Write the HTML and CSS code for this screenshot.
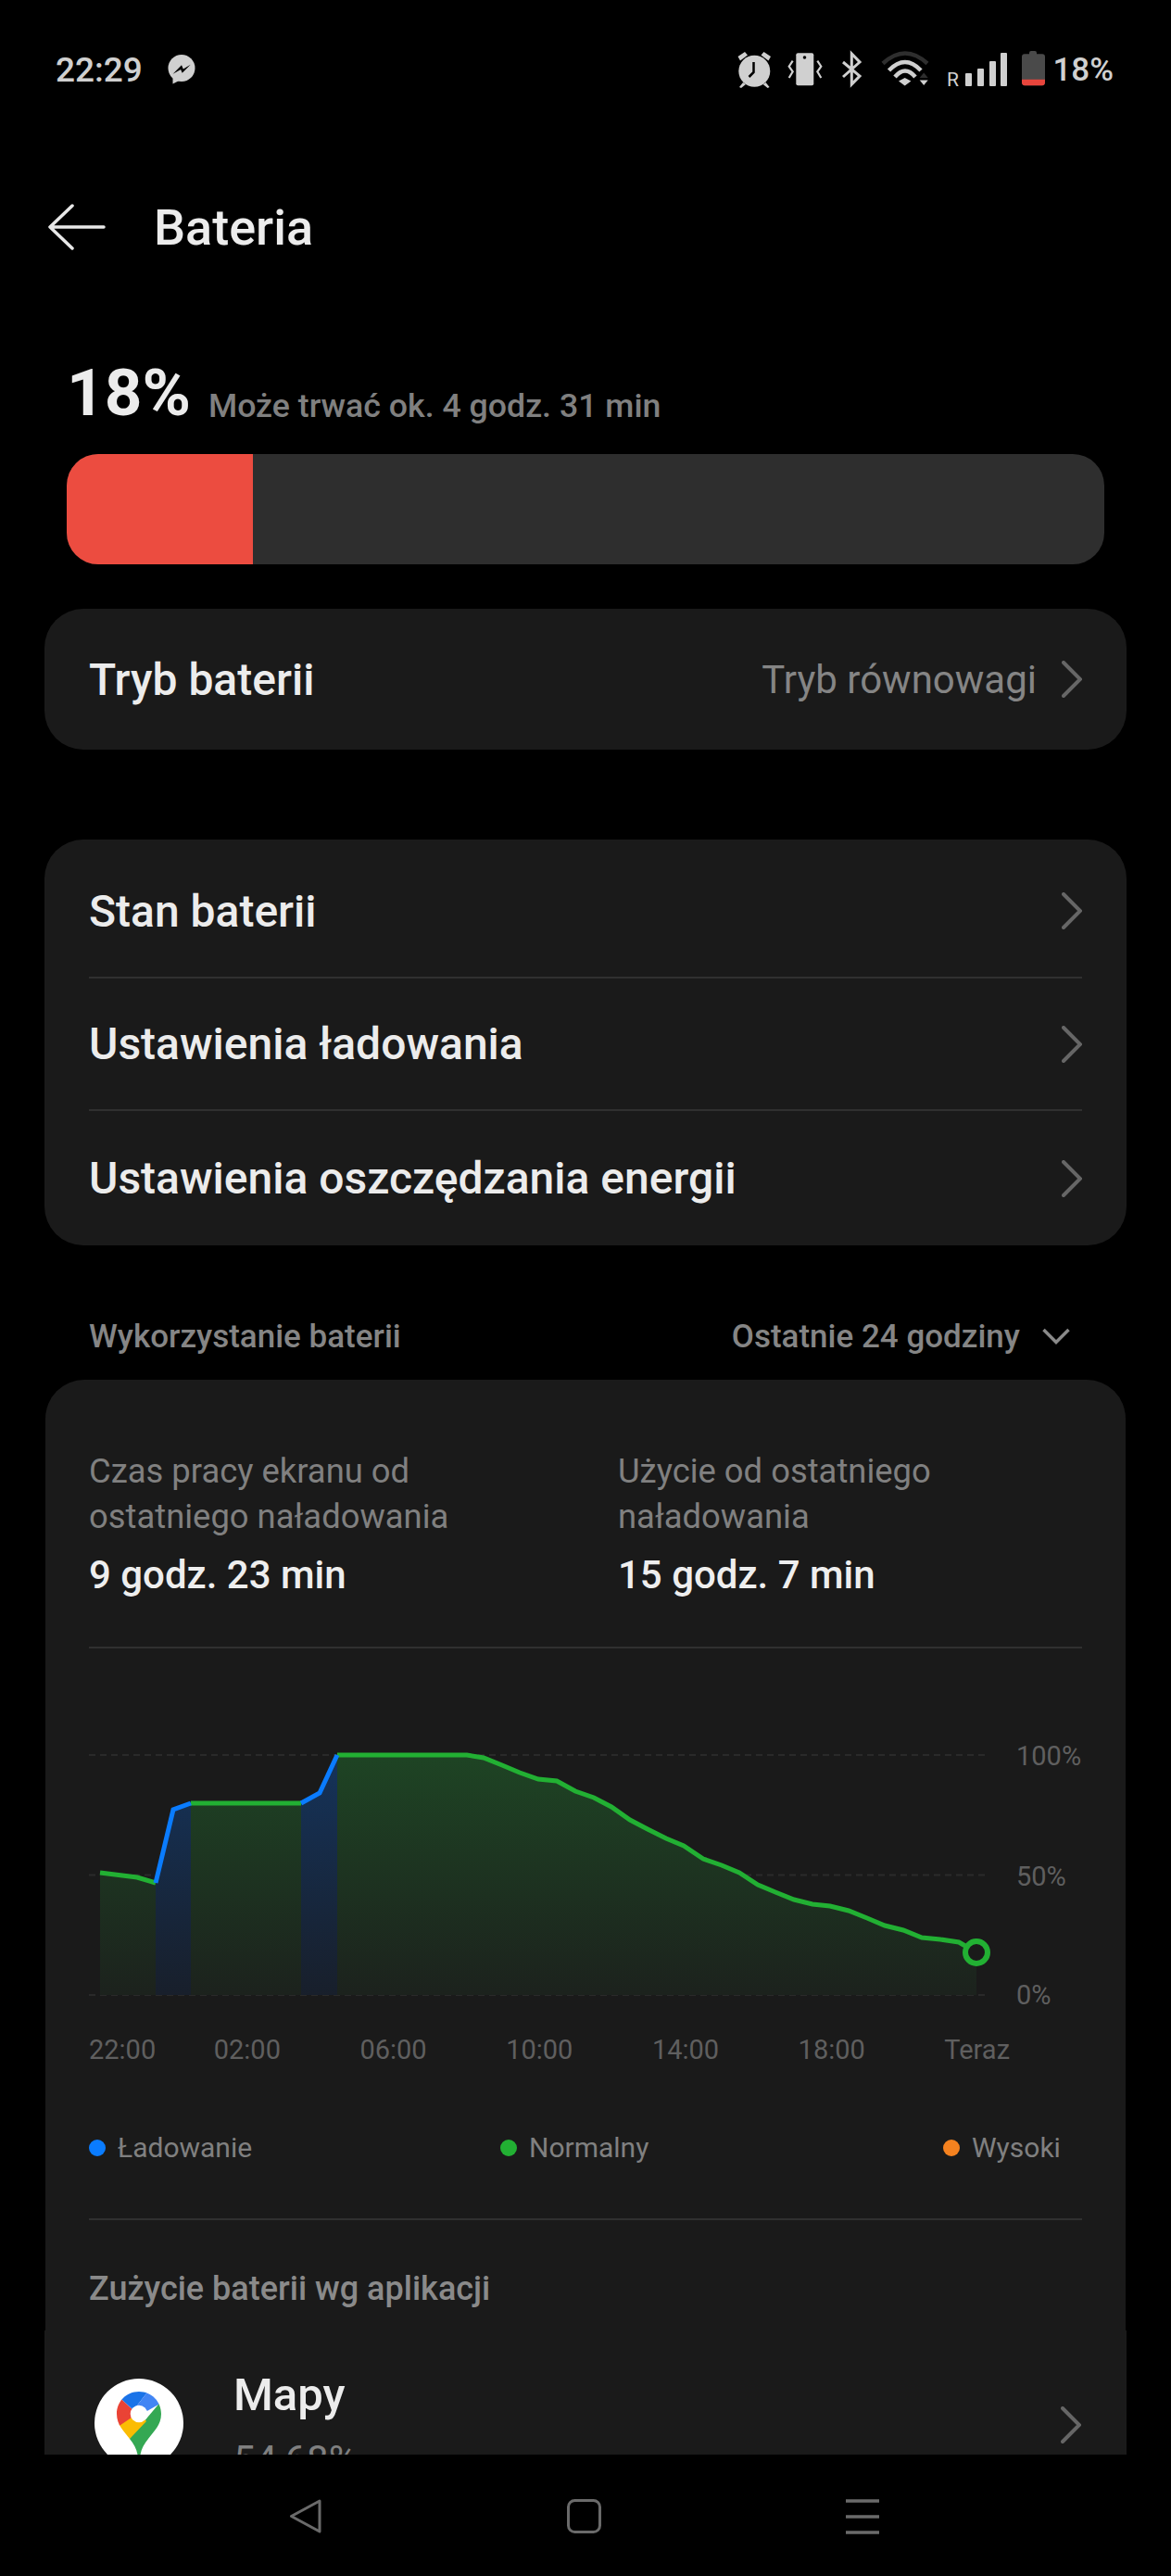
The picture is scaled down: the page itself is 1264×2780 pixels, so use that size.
FILE: index.html
```html
<!DOCTYPE html>
<html lang="pl">
<head>
    <meta charset="UTF-8">
    <title>Bateria</title>
    <link rel="stylesheet" href="styles.css">
</head>
<body>
    <div id="screen">
        <div class="status">
            <div class="status-left">
                <span class="clock">22:29</span>
                <svg width="30" height="32" viewBox="0 0 30 32">
                    <circle cx="15" cy="14.500" r="14.500" fill="#d0d0d0"/>
                    <path fill="#d0d0d0" d="M5.500 23v8.500l7-3.500z"/>
                    <path fill="#000" d="M5.700 20.700L15 11.300l1.800 4.300 7.900-4.900-9 9-1.600-3.700z"/>
                </svg>
            </div>
            <div class="status-right">
                <svg class="status-icons" width="332" height="48" viewBox="795 52 332 48">
                    <!-- budzik -->
                    <circle cx="813.300" cy="77.700" r="17" fill="#d0d0d0"/>
                    <path fill="#d0d0d0" d="M795.500 62l7.500-5 3 3.500-8 6zM831 62l-7.500-5-3 3.500 8 6zM801 90l-4 5 2 1 5-4zM825.600 90l4 5-2 1-5-4z"/>
                    <path fill="none" stroke="#000" stroke-width="2.500" d="M812.500 68v11l-5 5"/>
                    <!-- wibracje -->
                    <rect x="858.300" y="58.300" width="19" height="35" rx="2" fill="#d0d0d0"/>
                    <circle cx="867.500" cy="63" r="1.800" fill="#000"/>
                    <path fill="none" stroke="#d0d0d0" stroke-width="2.200" d="M854.700 66.700l-4 6 4 5.600-4 6.700M881.300 66.700l4 6-4 5.600 4 6.700"/>
                    <!-- bluetooth -->
                    <path fill="none" stroke="#d0d0d0" stroke-width="3" d="M909 68l18 15-8.700 9V59l8.700 9-18 16"/>
                    <!-- wifi -->
                    <path fill="none" stroke="#2e2e2e" stroke-width="4.500" d="M952 69.500Q976 47.500 1000 69.500"/>
                    <path fill="none" stroke="#d0d0d0" stroke-width="4.500" d="M958.500 77Q976 59 993 77M965 84Q976 71 987 84"/>
                    <path fill="#d0d0d0" d="M975.700 85l-6.700 3.500 6.700 5 6.700-5z"/>
                    <path fill="#2e2e2e" d="M991.700 85h9l-4.500-5.500z"/>
                    <path fill="#d0d0d0" d="M991.700 87.500h9l-4.500 5.500z"/>
                    <!-- zasieg -->
                    <text x="1021" y="94" class="roam">R</text>
                    <rect x="1041" y="80" width="7" height="14" rx="1" fill="#d0d0d0"/>
                    <rect x="1054" y="75" width="7" height="19" rx="1" fill="#d0d0d0"/>
                    <rect x="1067" y="67" width="7" height="27" rx="1" fill="#d0d0d0"/>
                    <rect x="1079" y="58" width="7" height="36" rx="1" fill="#d0d0d0"/>
                    <!-- bateria -->
                    <path fill="#4a4a4a" d="M1110 59.300V58a2 2 0 0 1 2-2h4a2 2 0 0 1 2 2v1.300h6a3 3 0 0 1 3 3V90a3.300 3.300 0 0 1-3 3.300h-19a3.300 3.300 0 0 1-3-3.300V62.300a3 3 0 0 1 3-3z"/>
                    <path fill="#e8453c" d="M1102 86.700h25V90a3.300 3.300 0 0 1-3 3.300h-19a3.300 3.300 0 0 1-3-3.300z"/>
                </svg>
                <span class="pct">18%</span>
            </div>
        </div>

        <div class="appbar">
            <svg width="62" height="50" viewBox="0 0 62 50"><path fill="none" stroke="#e8e8e8" stroke-width="3.500" stroke-linecap="round" stroke-linejoin="round" d="M26 2L2 25l24 23M2 25h58"/></svg>
            <h1>Bateria</h1>
        </div>

        <div class="scroll">
            <div class="charge">
                <span class="big">18%</span>
                <span class="remain">Może trwać ok. 4 godz. 31 min</span>
            </div>
            <div class="bar"><div class="bar-fill"></div></div>

            <div class="card">
                <div class="row">
                    <span class="row-name">Tryb baterii</span>
                    <span class="row-val">Tryb równowagi</span>
                    <svg class="chev" width="22" height="40" viewBox="0 0 22 40"><path d="M2 2l18 18L2 38"/></svg>
                </div>
            </div>

            <div class="card card-list">
                <div class="row">
                    <span class="row-name">Stan baterii</span>
                    <svg class="chev" width="22" height="40" viewBox="0 0 22 40"><path d="M2 2l18 18L2 38"/></svg>
                </div>
                <div class="row">
                    <span class="row-name">Ustawienia ładowania</span>
                    <svg class="chev" width="22" height="40" viewBox="0 0 22 40"><path d="M2 2l18 18L2 38"/></svg>
                </div>
                <div class="row">
                    <span class="row-name">Ustawienia oszczędzania energii</span>
                    <svg class="chev" width="22" height="40" viewBox="0 0 22 40"><path d="M2 2l18 18L2 38"/></svg>
                </div>
            </div>

            <div class="usage-head">
                <span>Wykorzystanie baterii</span>
                <span class="range">Ostatnie 24 godziny
                    <svg width="30" height="18" viewBox="0 0 30 18"><path fill="none" stroke="#8a8a8a" stroke-width="3.500" d="M1.500 2L15 15.500 28.500 2"/></svg>
                </span>
            </div>

            <div class="card card-usage">
                <div class="stats">
                    <div class="stat">
                        <p>Czas pracy ekranu od<br>ostatniego naładowania</p>
                        <b>9 godz. 23 min</b>
                    </div>
                    <div class="stat">
                        <p>Użycie od ostatniego<br>naładowania</p>
                        <b>15 godz. 7 min</b>
                    </div>
                </div>

                <div class="chart">
                    <svg width="1072" height="300" viewBox="96 1880 1072 300">
                        <defs>
                            <linearGradient id="gGreen" gradientUnits="userSpaceOnUse" x1="0" y1="1894" x2="0" y2="2153">
                                <stop offset="0" stop-color="#1e4424"/><stop offset="1" stop-color="#1c221d"/>
                            </linearGradient>
                            <linearGradient id="gBlue" gradientUnits="userSpaceOnUse" x1="0" y1="1894" x2="0" y2="2153">
                                <stop offset="0" stop-color="#15335a"/><stop offset="1" stop-color="#181f2b"/>
                            </linearGradient>
                        </defs>
                        <path class="grid" d="M96 1894H1066M96 2023.500H1066M96 2153H1066"/>
                        <path fill="url(#gGreen)" d="M108 2153V2021L148 2026 168 2032V2153zM206 2153V1946H325V2153zM364 2153V1894H504L522 1897 542 1905 561 1913 581 1920 601 1922 621 1933 641 1940 660 1950 680 1964 699 1974 719 1984 738 1992 759 2006 779 2013 798 2021 818 2034 837 2042 857 2050 877 2055 896 2057 916 2062 936 2070 955 2078 975 2083 995 2091 1015 2093 1035 2096 1054 2107V2153z"/>
                        <path fill="url(#gBlue)" d="M168 2153V2032L187 1953 206 1946V2153zM325 2153V1946L345 1935 364 1894V2153z"/>
                        <path class="line-green" d="M108 2021L148 2026 168 2032M206 1946H325M364 1894H504L522 1897 542 1905 561 1913 581 1920 601 1922 621 1933 641 1940 660 1950 680 1964 699 1974 719 1984 738 1992 759 2006 779 2013 798 2021 818 2034 837 2042 857 2050 877 2055 896 2057 916 2062 936 2070 955 2078 975 2083 995 2091 1015 2093 1035 2096 1054 2107"/>
                        <path class="line-blue" d="M168 2032L187 1953 206 1946M325 1946L345 1935 364 1894"/>
                        <circle class="now" cx="1054" cy="2107" r="12"/>
                    </svg>
                    <div class="y-axis"><span>100%</span><span>50%</span><span>0%</span></div>
                </div>

                <div class="x-axis">
                    <span>22:00</span><span>02:00</span><span>06:00</span><span>10:00</span><span>14:00</span><span>18:00</span><span>Teraz</span>
                </div>

                <div class="legend">
                    <span><i class="dot dot-blue"></i>Ładowanie</span>
                    <span><i class="dot dot-green"></i>Normalny</span>
                    <span><i class="dot dot-orange"></i>Wysoki</span>
                </div>

                <div class="apps-head">Zużycie baterii wg aplikacji</div>
            </div>

            <div class="card card-apps">
                <div class="app">
                    <svg class="app-ico" width="96" height="96" viewBox="0 0 96 96">
                        <defs>
                            <clipPath id="pin"><path d="M48 14C62 14 72 25 72 38 72 50 64 57 58 65 53 71 50 77 49 85H47C46 77 43 71 38 65 32 57 24 50 24 38 24 25 34 14 48 14z"/></clipPath>
                        </defs>
                        <circle cx="48" cy="48" r="48" fill="#fff"/>
                        <g clip-path="url(#pin)">
                            <path fill="#34a853" d="M74 22L30 74 60 100 90 60z"/>
                            <path fill="#fbbc04" d="M20 56L44 30 56 46 37 66 30 76z"/>
                            <path fill="#ea4335" d="M15 15L30 23 46 38 22 54 15 60z"/>
                            <path fill="#1a73e8" d="M15 0H56V16L42 34 30 23 15 15z"/>
                            <path fill="#4285f4" d="M56 0H90V10L69 28 48 40 42 34 56 16z"/>
                        </g>
                        <circle cx="48" cy="38" r="9.300" fill="#fff"/>
                    </svg>
                    <div class="app-text">
                        <span class="app-name">Mapy</span>
                        <span class="app-pct">54,68%</span>
                    </div>
                    <svg class="chev" width="22" height="40" viewBox="0 0 22 40"><path d="M2 2l18 18L2 38"/></svg>
                </div>
            </div>
        </div>

        <div class="nav">
            <svg width="36" height="37" viewBox="0 0 36 37"><path fill="none" stroke="#6a6a6a" stroke-width="3" stroke-linejoin="round" d="M33 2L2.500 18.500 33 35z"/></svg>
            <svg width="37" height="37" viewBox="0 0 37 37"><rect x="1.500" y="1.500" width="34" height="34" rx="7" fill="none" stroke="#6a6a6a" stroke-width="3"/></svg>
            <svg width="36" height="38" viewBox="0 0 36 38"><path fill="none" stroke="#6a6a6a" stroke-width="3.500" d="M0 2h36M0 19h36M0 36h36"/></svg>
        </div>
    </div>
</body>
</html>
```
FILE: styles.css
```css
* {
    margin: 0;
    padding: 0;
    box-sizing: border-box;
}

body {
    background: #000;
    font-family: Roboto, "Noto Sans", sans-serif;
}

#screen {
    width: 1264px;
    height: 2780px;
    display: flex;
    flex-direction: column;
    overflow: hidden;
}

.status {
    height: 150px;
    flex: none;
    display: flex;
    justify-content: space-between;
    align-items: center;
    padding: 0 62px 0 60px;
}

.status-left {
    display: flex;
    align-items: center;
    gap: 27px;
}

.clock {
    font-size: 37px;
    font-weight: 500;
    color: #d0d0d0;
}

.status-right {
    display: flex;
    align-items: center;
    gap: 8px;
}

.status-icons {
    display: block;
}

.roam {
    font-size: 21px;
    fill: #d0d0d0;
}

.pct {
    font-size: 35px;
    font-weight: 500;
    color: #d0d0d0;
}

.appbar {
    height: 190px;
    flex: none;
    display: flex;
    align-items: center;
    gap: 52px;
    padding: 0 52px;
}

.appbar h1 {
    font-size: 54px;
    font-weight: 500;
    color: #ececec;
}

.scroll {
    flex: 1;
    overflow: hidden;
    padding: 0 48px;
}

.charge {
    padding: 42px 24px 0;
    height: 124px;
    white-space: nowrap;
}

.big {
    font-size: 71px;
    font-weight: 700;
    color: #ececec;
}

.remain {
    margin-left: 15px;
    font-size: 35.7px;
    font-weight: 500;
    color: #808080;
    vertical-align: -2px;
}

.bar {
    margin: 26px 24px 48px;
    height: 119px;
    border-radius: 34px;
    background: #2e2e2e;
    overflow: hidden;
}

.bar-fill {
    width: 201px;
    height: 100%;
    background: #ec4c40;
}

.card {
    background: #1a1a1a;
    border-radius: 42px;
    padding: 0 48px;
}

.row {
    height: 152px;
    display: flex;
    align-items: center;
}

.row-name {
    flex: 1;
    font-size: 48px;
    font-weight: 500;
    color: #ececec;
}

.row-val {
    font-size: 42px;
    color: #858585;
    margin-right: 27px;
}

.chev {
    fill: none;
    stroke: #666;
    stroke-width: 4;
    stroke-linecap: round;
    flex: none;
}

.card-list {
    margin-top: 97px;
}

.card-list .row {
    height: 143px;
    border-top: 2px solid #303030;
}

.card-list .row:first-child {
    border-top: 0;
    height: 148px;
    padding-top: 6px;
}

.card-list .row:last-child {
    height: 147px;
}

.usage-head {
    height: 145px;
    display: flex;
    align-items: center;
    justify-content: space-between;
    padding: 51px 61px 0 48px;
    font-size: 35px;
    font-weight: 500;
    color: #858585;
}

.range {
    display: flex;
    align-items: center;
    gap: 24px;
}

.card-usage {
    margin: 0 1px;
    padding: 0 47px;
    border-radius: 42px 42px 0 0;
    height: 1026px;
}

.card-apps {
    border-radius: 0;
    height: 300px;
}

.stats {
    display: flex;
    padding: 74px 0 52px;
    border-bottom: 2px solid #303030;
}

.stat {
    flex: none;
}

.stat:first-child {
    width: 571px;
}

.stat p {
    font-size: 36.4px;
    line-height: 49px;
    color: #808080;
}

.stat b {
    display: block;
    margin-top: 14px;
    font-size: 42px;
    line-height: 50px;
    font-weight: 500;
    color: #eee;
}

.chart {
    position: relative;
    height: 300px;
    margin-top: 101px;
}

.chart svg {
    display: block;
}

.grid {
    fill: none;
    stroke: #2a2a2a;
    stroke-width: 2;
    stroke-dasharray: 7 5;
}

.line-green {
    fill: none;
    stroke: #22b033;
    stroke-width: 5;
}

.line-blue {
    fill: none;
    stroke: #0a7cff;
    stroke-width: 5;
}

.now {
    fill: #1a1a1a;
    stroke: #22b033;
    stroke-width: 6;
}

.y-axis span {
    position: absolute;
    left: 1001px;
    font-size: 29px;
    line-height: 32px;
    color: #5f5f5f;
}

.y-axis span:nth-child(1) { top: -1px; }
.y-axis span:nth-child(2) { top: 129px; }
.y-axis span:nth-child(3) { top: 257px; }

.x-axis {
    display: flex;
    gap: 85.5px;
    margin-top: 16px;
    font-size: 29px;
    line-height: 33px;
    color: #5f5f5f;
}

.x-axis span:first-child {
    margin-right: -23px;
}

.legend {
    display: grid;
    grid-template-columns: 444px 478px auto;
    padding: 71px 0 59px;
    border-bottom: 2px solid #303030;
    font-size: 30px;
    line-height: 35px;
    color: #808080;
}

.legend span {
    display: flex;
    align-items: center;
    gap: 13px;
}

.dot {
    width: 18px;
    height: 18px;
    border-radius: 50%;
}

.dot-blue { background: #0a7cff; }
.dot-green { background: #22b033; }
.dot-orange { background: #f5821f; }

.apps-head {
    padding-top: 53px;
    font-size: 36px;
    line-height: 42px;
    font-weight: 500;
    color: #8a8a8a;
}

.app {
    display: flex;
    align-items: flex-start;
    padding-top: 41px;
}

.app-ico {
    flex: none;
    margin: 11px 0 0 6px;
}

.app-text {
    flex: 1;
    padding-left: 54px;
    display: flex;
    flex-direction: column;
}

.app-name {
    font-size: 49px;
    line-height: 58px;
    font-weight: 500;
    color: #ececec;
}

.app-pct {
    font-size: 42px;
    line-height: 50px;
    color: #808080;
    margin-top: 16px;
}

.app .chev {
    margin: 41px 1px 0 0;
}

.nav {
    height: 131px;
    flex: none;
    display: flex;
    justify-content: space-between;
    padding: 48px 315px 0 312px;
    background: #000;
}
```
